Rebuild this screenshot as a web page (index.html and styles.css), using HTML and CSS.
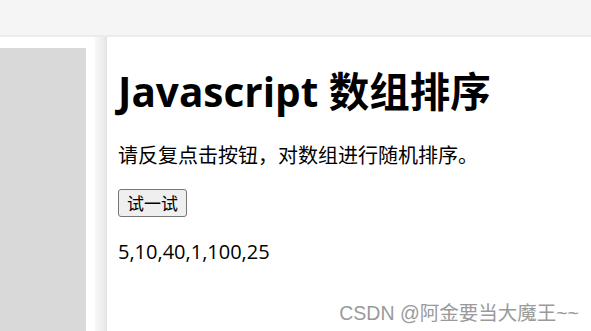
FILE: index.html
```html
<!DOCTYPE html>
<html lang="zh">
<head>
<meta charset="utf-8">
<link rel="stylesheet" href="styles.css">
</head>
<body>
<div class="topbar"></div>
<div class="main">
  <div class="left">
    <div class="leftbox"></div>
  </div>
  <div class="gutter"></div>
  <div class="right">
    <h1 class="title">Javascript 数组排序</h1>
    <p class="desc">请反复点击按钮，对数组进行随机排序。</p>
    <button class="btn">试一试</button>
    <p class="out">5,10,40,1,100,25</p>
    <div class="watermark">CSDN @阿金要当大魔王~~</div>
  </div>
</div>
</body>
</html>
```

FILE: styles.css
```css
html, body {
  margin: 0;
  padding: 0;
  height: 100%;
}
body {
  background: #f5f5f5;
  font-family: "Open Sans", "Noto Sans CJK SC", sans-serif;
  color: #000;
  overflow: hidden;
}
.topbar {
  height: 35px;
  background: #f5f5f5;
  border-bottom: 2px solid #ececec;
}
.main {
  display: flex;
  height: 294px;
}
.left {
  width: 95px;
  background: #fff;
  padding-top: 11px;
  box-sizing: border-box;
}
.leftbox {
  width: 86px;
  height: 100%;
  background: #d9d9d9;
}
.gutter {
  width: 11px;
  background: linear-gradient(to right, #f7f7f7, #efefef 60%, #e6e6e6);
}
.right {
  flex: 1;
  background: #fff;
  border-left: 1px solid #e3e3e3;
  padding: 0 10px 0 11px;
  position: relative;
}
.title {
  font-family: "Open Sans", "Noto Sans CJK SC", sans-serif;
  font-weight: 700;
  font-size: 40.5px;
  margin: 31px 0 0 0;
  line-height: 48px;
}
.desc {
  font-size: 20px;
  margin: 26px 0 0 0;
  line-height: 28px;
}
.btn {
  display: block;
  margin-top: 19px;
  font-family: "Noto Sans CJK SC", sans-serif;
  font-size: 17px;
  height: 28px;
  padding: 0 8px;
  border: 1px solid #767676;
  border-radius: 3px;
  background: #efefef;
  color: #000;
  line-height: 24px;
}
.out {
  font-size: 20px;
  margin: 21px 0 0 0;
  line-height: 28px;
}
.watermark {
  position: absolute;
  right: 12px;
  bottom: 5px;
  font-family: "Liberation Sans", "Noto Sans CJK SC", sans-serif;
  font-size: 19.5px;
  color: #9a9a9a;
}
```
